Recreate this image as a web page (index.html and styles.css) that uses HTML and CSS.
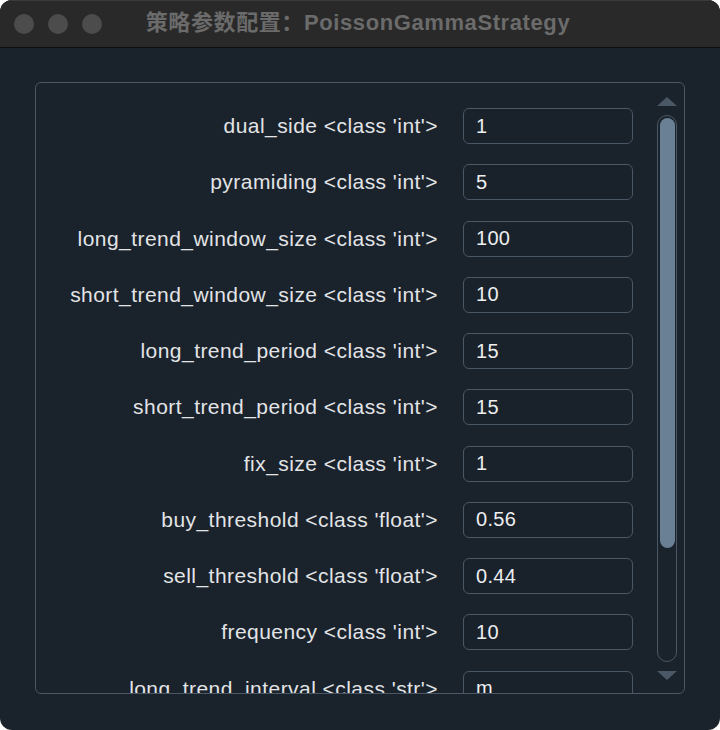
FILE: index.html
```html
<!DOCTYPE html>
<html>
<head>
<meta charset="utf-8">
<link rel="stylesheet" href="styles.css">
</head>
<body>
<div class="window">
  <div class="titlebar">
    <div class="lights"><span class="light"></span><span class="light"></span><span class="light"></span></div>
    <div class="title">策略参数配置：PoissonGammaStrategy</div>
    <div></div>
  </div>
  <div class="content">
    <div class="frame">
      <div class="list">
        <div class="label">dual_side &lt;class 'int'&gt;</div><div class="input">1</div>
        <div class="label">pyramiding &lt;class 'int'&gt;</div><div class="input">5</div>
        <div class="label">long_trend_window_size &lt;class 'int'&gt;</div><div class="input">100</div>
        <div class="label">short_trend_window_size &lt;class 'int'&gt;</div><div class="input">10</div>
        <div class="label">long_trend_period &lt;class 'int'&gt;</div><div class="input">15</div>
        <div class="label">short_trend_period &lt;class 'int'&gt;</div><div class="input">15</div>
        <div class="label">fix_size &lt;class 'int'&gt;</div><div class="input">1</div>
        <div class="label">buy_threshold &lt;class 'float'&gt;</div><div class="input">0.56</div>
        <div class="label">sell_threshold &lt;class 'float'&gt;</div><div class="input">0.44</div>
        <div class="label">frequency &lt;class 'int'&gt;</div><div class="input">10</div>
        <div class="label">long_trend_interval &lt;class 'str'&gt;</div><div class="input">m</div>
      </div>
      <div class="scroll">
        <div class="arrow up"></div>
        <div class="track"><div class="handle"></div></div>
        <div class="arrow down"></div>
      </div>
    </div>
  </div>
</div>
</body>
</html>
```
FILE: styles.css
```css
html, body { margin: 0; padding: 0; background: #ffffff; }
.window {
  width: 720px; height: 730px; border-radius: 12px; overflow: hidden;
  background: #1a222c; display: flex; flex-direction: column;
  font-family: "Liberation Sans", Arial, sans-serif;
}
.titlebar {
  height: 47px; flex: none; background: #292929;
  border-bottom: 1px solid #0e0e0e; box-shadow: inset 0 1px 0 #3a3a3a;
  display: grid; grid-template-columns: 1fr auto 1fr; align-items: center;
}
.lights { display: flex; gap: 14px; padding-left: 14px; }
.light { width: 20px; height: 20px; border-radius: 50%; background: #4c4c4c; }
.title {
  font-family: "Liberation Sans", "Noto Sans CJK SC", sans-serif;
  font-weight: bold; font-size: 22px; letter-spacing: 0.6px; color: #6b6b6b;
  padding-bottom: 8px; margin-right: 4px;
}
.content {
  flex: 1; min-height: 0; overflow: hidden; box-sizing: border-box;
  padding: 34px 35px 36px 35px; display: flex;
}
.frame {
  flex: 1; min-height: 0; border: 1px solid #4a5765; border-radius: 6px; overflow: hidden;
  display: flex;
}
.list {
  flex: 1; min-height: 0; overflow: hidden; padding: 25px 24px 0 0;
  display: grid; grid-template-columns: 1fr 170px; column-gap: 25px; row-gap: 20.25px;
  align-content: start; grid-auto-rows: 36px;
}
.label {
  text-align: right; color: #e2e4e6; font-size: 21px; letter-spacing: 0.45px;
  align-self: center; white-space: nowrap;
}
.input {
  box-sizing: border-box; border: 1.5px solid #4a5765; border-radius: 6px;
  background: #19212a; color: #eceef0; font-size: 20px; padding-left: 12px;
  display: flex; align-items: center; letter-spacing: 0.3px;
}
.scroll {
  width: 20px; margin-right: 7px; padding-top: 14px;
  display: flex; flex-direction: column; align-items: center; gap: 9px;
}
.arrow { width: 0; height: 0; border-left: 10px solid transparent; border-right: 10px solid transparent; }
.arrow.up { border-bottom: 9px solid #4a5765; }
.arrow.down { border-top: 9px solid #4a5765; }
.track {
  box-sizing: border-box; width: 20px; height: 547px; flex: none; border: 1.5px solid #4a5765;
  border-radius: 10px; padding: 1.5px;
}
.handle { height: 430px; border-radius: 8px; background: #6a8095; }
```
